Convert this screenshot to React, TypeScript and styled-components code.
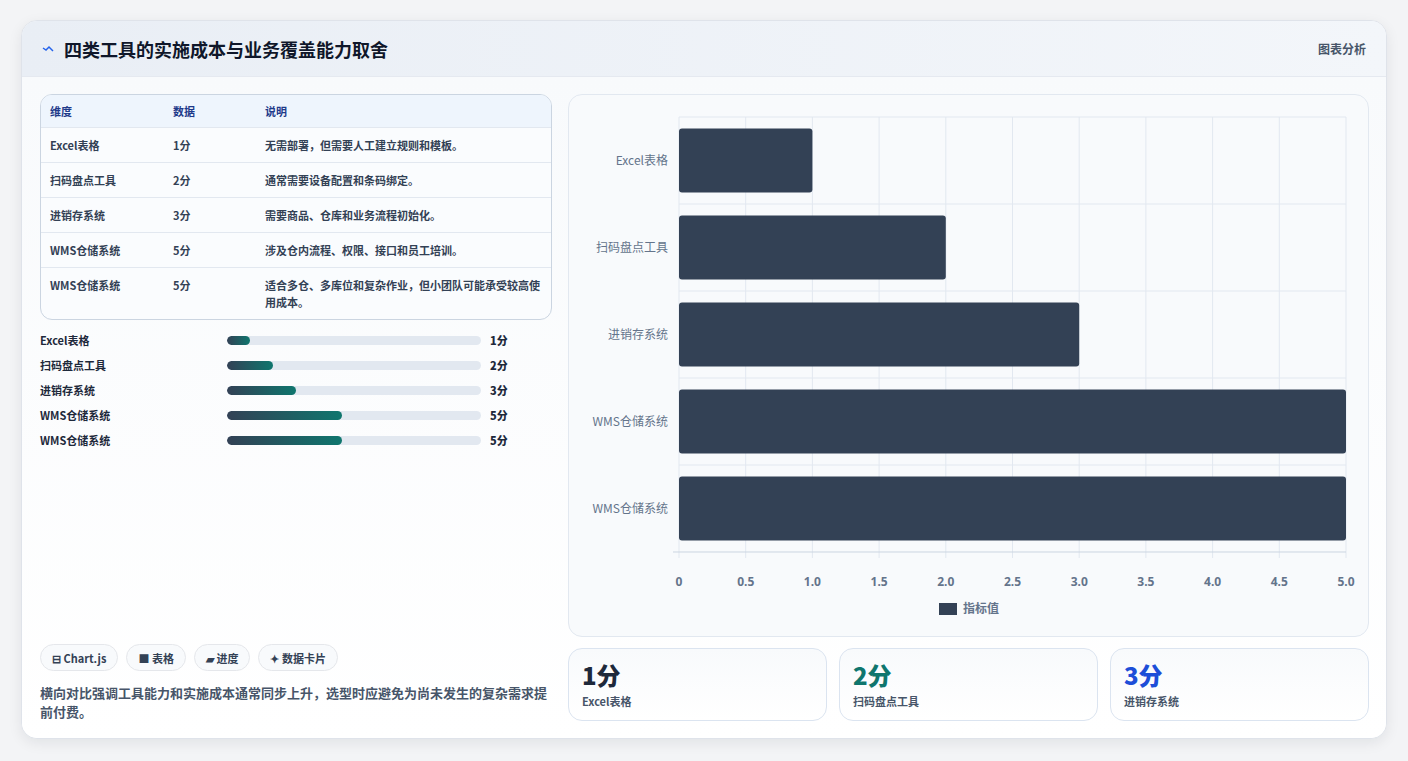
import React from "react";
import styled, { createGlobalStyle } from "styled-components";

const G = createGlobalStyle`
  body{margin:0;background:#f3f4f6;font-family:"Noto Sans CJK SC","Noto Sans",sans-serif;}
`;
const Page = styled.div`padding:20px 21px 22px 21px;`;
const Card = styled.div`
  width:1366px;height:719px;box-sizing:border-box;background:#fff;border:1px solid #dfe3ea;border-radius:16px;
  box-shadow:0 4px 14px rgba(15,23,42,.08);overflow:hidden;display:flex;flex-direction:column;`;
const Header = styled.div`
  height:55px;flex:none;display:flex;align-items:center;justify-content:space-between;padding:0 20px 0 20px;
  background:linear-gradient(90deg,#e9eef5,#f3f6fa);border-bottom:1px solid #e5e9f0;`;
const Title = styled.h1`margin:0;font-size:18px;font-weight:700;color:#0f172a;display:flex;align-items:center;gap:10px;`;
const Small = styled.span`font-size:12px;font-weight:600;color:#475569;`;
const Body = styled.div`flex:1;display:grid;grid-template-columns:512px 801px;gap:16px;padding:17px 18px 18px 18px;
  background:linear-gradient(180deg,#f8fafc,#fff);`;
const Left = styled.div`display:flex;flex-direction:column;`;
const Table = styled.div`border:1px solid #cbd5e1;border-radius:12px;overflow:hidden;background:#fafcfe;`;
const Row = styled.div<{ head?: boolean }>`
  display:grid;grid-template-columns:123px 92px 1fr;padding:${p => p.head ? "0" : "0"} 9px;
  min-height:${p => p.head ? 32 : 34}px;align-items:${p => p.head ? "center" : "start"};
  font-size:11px;font-weight:${p => p.head ? 700 : 600};color:${p => p.head ? "#1e3a8a" : "#334155"};
  background:${p => p.head ? "#eef5fd" : "transparent"};
  border-top:${p => p.head ? "none" : "1px solid #e2e8f0"};
  & > span{padding:${p => p.head ? "0" : "9px 0 8px"};line-height:17px;}
`;
const Bars = styled.div`display:flex;flex-direction:column;gap:7px;margin-top:11px;`;
const BarRow = styled.div`display:grid;grid-template-columns:187px 254px 1fr;align-items:center;height:18px;
  font-size:11px;font-weight:700;color:#1e293b;& > b{padding-left:9px;}`;
const Track = styled.div`height:9px;border-radius:5px;background:#e2e8f0;overflow:hidden;`;
const Fill = styled.div`height:100%;border-radius:5px;background:linear-gradient(90deg,#334155,#0f766e);`;
const Spacer = styled.div`flex:1;`;
const Tags = styled.div`display:flex;gap:8px;`;
const Tag = styled.span`height:27px;box-sizing:border-box;padding:0 11px;border:1px solid #e5e7eb;border-radius:14px;background:#f8fafc;
  display:flex;align-items:center;gap:4px;font-size:11px;font-weight:700;color:#334155;`;
const Desc = styled.p`margin:12px 0 0;font-size:13px;line-height:19px;font-weight:600;color:#475569;`;
const Right = styled.div`display:flex;flex-direction:column;gap:11px;`;
const ChartBox = styled.div`height:543px;box-sizing:border-box;border:1px solid #e2e8f0;border-radius:14px;background:#f8fafc;overflow:hidden;`;
const Stats = styled.div`display:grid;grid-template-columns:repeat(3,1fr);gap:12px;`;
const Stat = styled.div`height:73px;box-sizing:border-box;border:1px solid #dbe4f0;border-radius:14px;padding:10px 13px;
  background:linear-gradient(180deg,#f8fafc,#fff);`;
const Num = styled.div<{ c: string }>`font-size:24px;font-weight:800;color:${p => p.c};line-height:32px;`;
const Lab = styled.div`font-size:11px;font-weight:600;color:#475569;margin-top:2px;`;

const rows = [
  ["Excel表格", "1分", "无需部署，但需要人工建立规则和模板。", 1],
  ["扫码盘点工具", "2分", "通常需要设备配置和条码绑定。", 2],
  ["进销存系统", "3分", "需要商品、仓库和业务流程初始化。", 3],
  ["WMS仓储系统", "5分", "涉及仓内流程、权限、接口和员工培训。", 5],
  ["WMS仓储系统", "5分", "适合多仓、多库位和复杂作业，但小团队可能承受较高使用成本。", 5],
] as const;

function Chart() {
  const x0 = 110, x1 = 777, y0 = 22, y1 = 457, unit = (x1 - x0) / 5, band = (y1 - y0) / 5;
  const ticks = Array.from({ length: 11 }, (_, i) => i * 0.5);
  return (
    <svg width="801" height="543" style={{ display: "block" }}>
      {ticks.map(t => <line key={t} x1={x0 + t * unit} x2={x0 + t * unit} y1={y0} y2={y1 + 6} stroke="#e2e8f0" />)}
      {[0, 1, 2, 3, 4, 5].map(i => <line key={i} x1={x0 - (i === 5 ? 6 : 0)} x2={x1} y1={y0 + i * band} y2={y0 + i * band} stroke={i === 5 ? "#cbd5e1" : "#e2e8f0"} />)}
      {rows.map((r, i) => {
        const cy = y0 + band * i + band / 2;
        return <g key={i}>
          <rect x={x0} y={cy - 32} width={r[3] * unit} height={64} rx={3} fill="#334155" />
          <text x={99} y={cy + 4} textAnchor="end" fontSize="12" fill="#64748b" fontFamily="Noto Sans CJK SC,sans-serif">{r[0]}</text>
        </g>;
      })}
      {ticks.map(t => <text key={t} x={x0 + t * unit} y={491} textAnchor="middle" fontSize="12" fontWeight="700" fill="#64748b" fontFamily="Noto Sans,sans-serif">{t === 0 ? "0" : t.toFixed(1)}</text>)}
      <rect x={370} y={508} width={18} height={12} fill="#334155" />
      <text x={394} y={518} fontSize="12" fontWeight="600" fill="#64748b" fontFamily="Noto Sans CJK SC,sans-serif">指标值</text>
    </svg>
  );
}

export default function App() {
  return (
    <Page>
      <G />
      <Card>
        <Header>
          <Title><svg width="12" height="8" viewBox="0 0 12 8"><path d="M1 3l3 2 3-3 4 4" stroke="#2563eb" strokeWidth="1.5" fill="none" /></svg>四类工具的实施成本与业务覆盖能力取舍</Title>
          <Small>图表分析</Small>
        </Header>
        <Body>
          <Left>
            <Table>
              <Row head><span>维度</span><span>数据</span><span>说明</span></Row>
              {rows.map((r, i) => <Row key={i}><span>{r[0]}</span><span>{r[1]}</span><span>{r[2]}</span></Row>)}
            </Table>
            <Bars>
              {rows.map((r, i) => <BarRow key={i}><span>{r[0]}</span><Track><Fill style={{ width: `${r[3] / 11 * 100}%` }} /></Track><b>{r[1]}</b></BarRow>)}
            </Bars>
            <Spacer />
            <Tags>
              <Tag>⊟ Chart.js</Tag><Tag>■ 表格</Tag><Tag>▰ 进度</Tag><Tag>✦ 数据卡片</Tag>
            </Tags>
            <Desc>横向对比强调工具能力和实施成本通常同步上升，选型时应避免为尚未发生的复杂需求提前付费。</Desc>
          </Left>
          <Right>
            <ChartBox><Chart /></ChartBox>
            <Stats>
              <Stat><Num c="#1e293b">1分</Num><Lab>Excel表格</Lab></Stat>
              <Stat><Num c="#0f766e">2分</Num><Lab>扫码盘点工具</Lab></Stat>
              <Stat><Num c="#1d4ed8">3分</Num><Lab>进销存系统</Lab></Stat>
            </Stats>
          </Right>
        </Body>
      </Card>
    </Page>
  );
}
